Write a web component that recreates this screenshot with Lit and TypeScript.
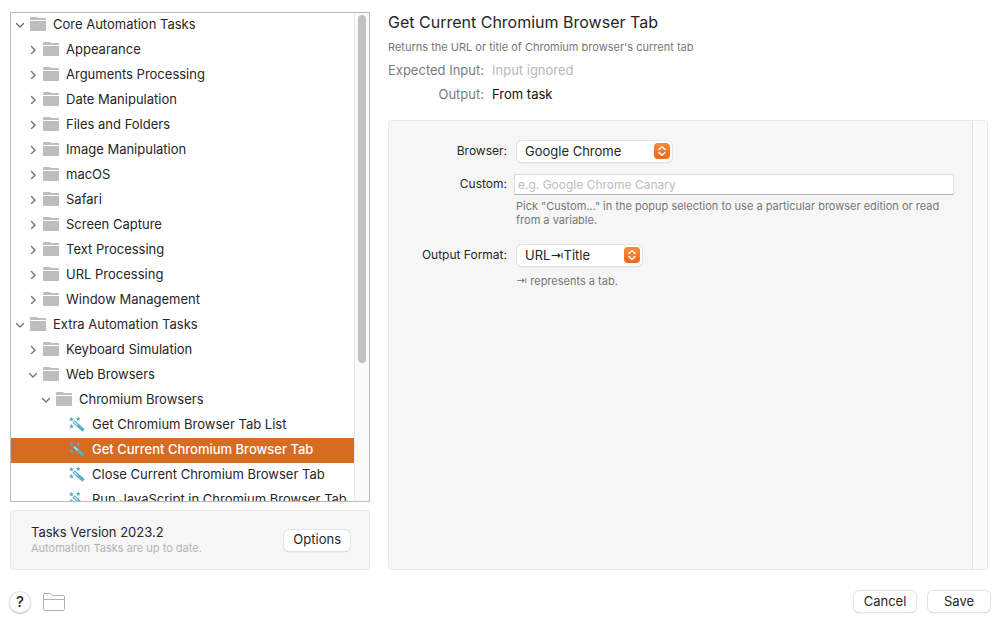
import { LitElement, html, css, svg } from "lit";
import { customElement, state } from "lit/decorators.js";
import { classMap } from "lit/directives/class-map.js";

type Kind = "open" | "closed" | "task";
interface Row {
  level: number;
  kind: Kind;
  label: string;
}

const row = (level: number, kind: Kind, label: string): Row => ({ level, kind, label });

const ROWS: Row[] = [
  row(0, "open", "Core Automation Tasks"),
  row(1, "closed", "Appearance"),
  row(1, "closed", "Arguments Processing"),
  row(1, "closed", "Date Manipulation"),
  row(1, "closed", "Files and Folders"),
  row(1, "closed", "Image Manipulation"),
  row(1, "closed", "macOS"),
  row(1, "closed", "Safari"),
  row(1, "closed", "Screen Capture"),
  row(1, "closed", "Text Processing"),
  row(1, "closed", "URL Processing"),
  row(1, "closed", "Window Management"),
  row(0, "open", "Extra Automation Tasks"),
  row(1, "closed", "Keyboard Simulation"),
  row(1, "open", "Web Browsers"),
  row(2, "open", "Chromium Browsers"),
  row(3, "task", "Get Chromium Browser Tab List"),
  row(3, "task", "Get Current Chromium Browser Tab"),
  row(3, "task", "Close Current Chromium Browser Tab"),
  row(3, "task", "Run JavaScript in Chromium Browser Tab"),
];

const chevron = (kind: Kind) => html`<svg class="chevron" viewBox="0 0 10 10" aria-hidden="true">
  ${kind === "open"
    ? svg`<path d="M1.5 4.5 L5 8 L8.5 4.5" />`
    : kind === "closed"
      ? svg`<path d="M3.5 2.5 L7 6.2 L3.5 9.5" />`
      : ""}
</svg>`;

const folder = html`<svg class="icon" viewBox="0 0 16 16" aria-hidden="true">
  <path fill="#bdbdbd" d="M0 4V2.2Q0 1 1.200 1H6.500Q7.500 1 7.800 2H15Q16 2 16 3V4Z" />
  <path fill="#bdbdbd" d="M0 5H16V14Q16 15 15 15H1Q0 15 0 14Z" />
</svg>`;

const star = (x: number, y: number) =>
  svg`<path transform="translate(${x} ${y})" d="M0 -2.500L.7 -.8L2.400 -.7L1.100 .5L1.500 2.200L0 1.200L-1.500 2.200L-1.100 .5L-2.400 -.7L-.7 -.8Z" />`;

const wand = html`<svg class="icon" viewBox="0 0 16 16" aria-hidden="true">
  <g fill="#55adc6">${star(2.4, 3.2)}${star(9.2, 2.7)}${star(2.4, 10.2)}</g>
  <path d="M4.600 5.500L14.600 14.500" stroke="#55adc6" stroke-width="3.200" />
  <path d="M5.200 6L8.600 9.100" stroke="#d8eef4" stroke-width="1.100" />
</svg>`;

const arrows = html`<svg class="arrows" viewBox="0 0 16 16" aria-hidden="true">
  <path d="M5 6.500L8 3.700L11 6.500M5 9.500L8 12.300L11 9.500" />
</svg>`;

@customElement("app-root")
export class AppRoot extends LitElement {
  @state() private selected = 17;

  static styles = css`
    :host {
      display: flex;
      flex-direction: column;
      box-sizing: border-box;
      height: 100vh;
      padding: 12px 10px 11px;
      background: #fff;
      color: #262626;
      font: 13px/16px Inter, "Liberation Sans", sans-serif;
    }
    * {
      box-sizing: border-box;
    }
    button,
    select,
    input {
      font: inherit;
      color: inherit;
      margin: 0;
    }
    h1,
    p,
    ul,
    dl,
    dd {
      margin: 0;
      padding: 0;
    }
    .main {
      flex: 1;
      min-height: 0;
      display: grid;
      grid-template-columns: 360px minmax(0, 1fr);
      gap: 18px;
    }
    .side,
    .detail {
      display: flex;
      flex-direction: column;
      min-height: 0;
    }
    .side {
      gap: 8px;
    }
    .tree {
      flex: 1;
      min-height: 0;
      display: flex;
      border: 1px solid #bcbcbc;
      overflow: hidden;
    }
    .rows {
      flex: 1;
      min-width: 0;
      list-style: none;
    }
    .row {
      display: flex;
      align-items: center;
      height: 25px;
      padding-bottom: 3px;
      white-space: nowrap;
    }
    .row.l0 {
      padding-left: 4px;
    }
    .row.l1 {
      padding-left: 17px;
    }
    .row.l2 {
      padding-left: 30px;
    }
    .row.l3 {
      padding-left: 43px;
    }
    .row.selected {
      background: #d66b22;
      color: #fff;
      font-weight: 500;
    }
    .chevron {
      width: 10px;
      height: 10px;
      margin-right: 5px;
      fill: none;
      stroke: #757575;
      stroke-width: 1.4;
      stroke-linecap: round;
      stroke-linejoin: round;
    }
    .icon {
      width: 16px;
      height: 16px;
      margin-right: 7px;
    }
    .track {
      width: 15px;
      padding: 2px 3px;
      border-left: 1px solid #e8e8e8;
      background: #fafafa;
    }
    .thumb {
      width: 8px;
      height: 72%;
      border-radius: 4px;
      background: #c1c1c1;
    }
    .panel {
      background: #f6f6f6;
      border: 1px solid #e9e9e9;
      border-radius: 4px;
    }
    .status {
      display: flex;
      align-items: center;
      justify-content: space-between;
      height: 60px;
      padding: 0 19px 0 20px;
    }
    .status-text {
      padding-bottom: 2px;
    }
    .note {
      font-size: 11px;
      line-height: 14px;
      color: #777;
    }
    .status .note {
      margin-top: 1px;
      color: #b4b4b4;
    }
    .button {
      height: 21px;
      min-width: 62px;
      padding: 0 9px 2px;
      border: 0;
      border-radius: 5px;
      background: #fff;
      box-shadow: 0 0 0 1px #e4e4e4, 0 1px 1px 0 #b0b0b0;
      text-align: center;
    }
    h1 {
      font-size: 16px;
      line-height: 20px;
      font-weight: 400;
    }
    .detail > .note {
      margin-top: 8px;
    }
    .facts {
      display: grid;
      grid-template-columns: max-content 1fr;
      gap: 8px;
      margin: 8px 0 18px;
    }
    .facts dt {
      text-align: right;
      color: #7c7c7c;
    }
    .facts .dim {
      color: #b8b8b8;
    }
    .facts dd {
      color: #111;
    }
    .form {
      flex: 1;
      display: flex;
      overflow: hidden;
    }
    .fields {
      flex: 1;
      min-width: 0;
      display: grid;
      grid-template-columns: 118px minmax(0, 1fr);
      align-content: start;
      column-gap: 7px;
      padding: 20px 18px 20px 0;
    }
    .fields label {
      text-align: right;
      font-size: 12px;
      line-height: 20px;
    }
    .popup {
      position: relative;
      justify-self: start;
      margin-left: 3px;
    }
    .popup select {
      appearance: none;
      width: 100%;
      height: 21px;
      padding: 0 8px 1px;
      border: 0;
      border-radius: 5px;
      background: #fff;
      box-shadow: 0 0 0 1px #e4e4e4, 0 1px 1px 0 #b0b0b0;
      display: block;
    }
    .browser {
      width: 155px;
      margin-bottom: 12px;
    }
    .format {
      width: 125px;
      margin-bottom: 8px;
    }
    .arrows {
      position: absolute;
      right: 2px;
      top: 2px;
      width: 16px;
      height: 16px;
      border-radius: 4px;
      background: linear-gradient(#f98a3a, #f1691c);
      fill: none;
      stroke: #fff;
      stroke-width: 1.5;
      stroke-linecap: round;
      stroke-linejoin: round;
      pointer-events: none;
    }
    .text {
      width: 100%;
      height: 21px;
      padding: 0 3px;
      border: 1px solid #dedede;
      border-bottom-color: #b2b2b2;
      border-radius: 0;
      background: #fff;
      font-size: 12px;
    }
    .text::placeholder {
      color: #bdbdbd;
      opacity: 1;
    }
    .fields .note {
      grid-column: 2;
      margin-left: 2px;
    }
    .fields .hint {
      margin: 4px 0 18px 2px;
    }
    .gutter {
      width: 15px;
      border-left: 1px solid #e4e4e4;
      background: #fafafa;
    }
    .footer {
      display: flex;
      align-items: center;
      gap: 12px;
      height: 21px;
      margin: 21px -2px 0 0;
    }
    .help {
      width: 20px;
      height: 20px;
      padding: 0;
      border: 0;
      border-radius: 50%;
      background: #fff;
      box-shadow: 0 0 0 1px #e8e8e8, 0 1px 1px 1px #c8c8c8;
      font-size: 15px;
      font-weight: 500;
      line-height: 20px;
    }
    .open {
      width: 24px;
      height: 20px;
      padding: 0;
      border: 0;
      background: none;
      margin-right: auto;
    }
    .open svg {
      display: block;
      width: 24px;
      height: 20px;
      fill: none;
      stroke: #b0b0b0;
    }
  `;

  render() {
    return html`
      <div class="main">
        <section class="side">
          <div class="tree">
            <ul class="rows" role="tree" aria-label="Tasks">
              ${ROWS.map(
                (r, i) => html`<li
                  role="treeitem"
                  aria-level=${r.level + 1}
                  aria-selected=${i === this.selected}
                  class=${classMap({ row: true, [`l${r.level}`]: true, selected: i === this.selected })}
                  @click=${() => (this.selected = i)}
                >
                  ${chevron(r.kind)}${r.kind === "task" ? wand : folder}<span>${r.label}</span>
                </li>`,
              )}
            </ul>
            <div class="track"><div class="thumb"></div></div>
          </div>
          <div class="panel status">
            <div class="status-text">
              <p>Tasks Version 2023.2</p>
              <p class="note">Automation Tasks are up to date.</p>
            </div>
            <button class="button">Options</button>
          </div>
        </section>

        <section class="detail">
          <h1>Get Current Chromium Browser Tab</h1>
          <p class="note">Returns the URL or title of Chromium browser's current tab</p>
          <dl class="facts">
            <dt>Expected Input:</dt>
            <dd class="dim">Input ignored</dd>
            <dt>Output:</dt>
            <dd>From task</dd>
          </dl>
          <div class="panel form">
            <div class="fields">
              <label for="browser">Browser:</label>
              <div class="popup browser">
                <select id="browser"><option>Google Chrome</option></select>${arrows}
              </div>
              <label for="custom">Custom:</label>
              <input class="text" id="custom" placeholder="e.g. Google Chrome Canary" />
              <p class="note hint">
                Pick "Custom..." in the popup selection to use a particular browser edition or read from a variable.
              </p>
              <label for="format">Output Format:</label>
              <div class="popup format">
                <select id="format"><option>URL⇥Title</option></select>${arrows}
              </div>
              <p class="note">⇥ represents a tab.</p>
            </div>
            <div class="gutter"></div>
          </div>
        </section>
      </div>

      <footer class="footer">
        <button class="help" aria-label="Help">?</button>
        <button class="open" aria-label="Open folder">
          <svg viewBox="0 0 24 20">
            <path d="M1.500 16.500V3Q1.500 1.500 3 1.500H8Q9 1.500 9.700 2.500L10.300 3.500H21Q22.500 3.500 22.500 5V16.500Q22.500 18.500 21 18.500H3Q1.500 18.500 1.500 16.500ZM1.500 7.500H22.500" />
          </svg>
        </button>
        <button class="button">Cancel</button>
        <button class="button">Save</button>
      </footer>
    `;
  }
}
